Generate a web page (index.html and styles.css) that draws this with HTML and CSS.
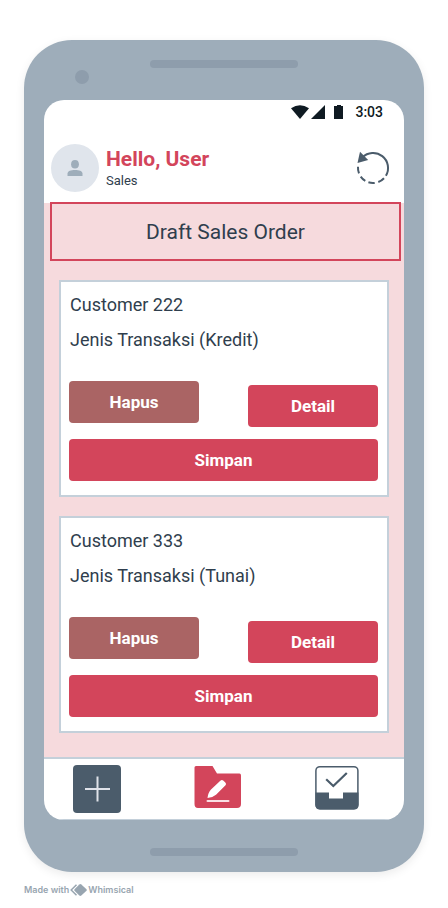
FILE: index.html
```html
<!DOCTYPE html>
<html lang="id">
<head>
<meta charset="utf-8">
<meta name="viewport" content="width=device-width, initial-scale=1">
<title>Draft Sales Order</title>
<link rel="stylesheet" href="styles.css">
</head>
<body>
<div class="phone">
  <div class="bezel bezel-top">
    <span class="camera"></span>
    <span class="slot"></span>
  </div>
  <div class="screen">
    <div class="status">
      <svg width="53" height="14" viewBox="0 0 53 14" fill="#0f1a22" aria-hidden="true">
        <path d="M0 3.2Q9-2.6 18 3.2L9 14Z"/>
        <path d="M34 0V14H20Z"/>
        <path d="M43 1H46V0H50V1H52V14H43Z"/>
      </svg>
      <span>3:03</span>
    </div>
    <header class="header">
      <svg class="avatar" viewBox="0 0 48 48" aria-hidden="true">
        <circle cx="24" cy="24" r="24" fill="#e0e5ec"/>
        <ellipse cx="24" cy="20.3" rx="3.9" ry="4.3" fill="#9eadba"/>
        <path d="M16.5 32V29.6C16.5 27 20 26 24 26S31.500 27 31.500 29.600V32Z" fill="#9eadba"/>
      </svg>
      <div class="user">
        <strong class="hello">Hello, User</strong>
        <span class="role">Sales</span>
      </div>
      <button class="refresh" type="button" aria-label="Refresh">
        <svg width="34" height="34" viewBox="0 0 34 34" fill="none" stroke="#4b5c6b" stroke-width="2">
          <path d="M6.400 6.400A15 15 0 0 1 29.900 24.700"/>
          <path d="M28 27.200A15 15 0 0 1 22.300 31M18.700 31.900A15 15 0 0 1 12.400 31.300M9.300 29.900A15 15 0 0 1 4.700 25.600M3 22.300A15 15 0 0 1 2 15.700"/>
          <path d="M4 .7L12.200 9L1.500 12Z" fill="#4b5c6b" stroke="none"/>
        </svg>
      </button>
    </header>
    <main class="content">
      <h1 class="title">Draft Sales Order</h1>
      <section class="card">
        <p class="line">Customer 222</p>
        <p class="line">Jenis Transaksi (Kredit)</p>
        <div class="actions">
          <button class="btn delete" type="button">Hapus</button>
          <button class="btn detail" type="button">Detail</button>
        </div>
        <button class="btn save" type="button">Simpan</button>
      </section>
      <section class="card">
        <p class="line">Customer 333</p>
        <p class="line">Jenis Transaksi (Tunai)</p>
        <div class="actions">
          <button class="btn delete" type="button">Hapus</button>
          <button class="btn detail" type="button">Detail</button>
        </div>
        <button class="btn save" type="button">Simpan</button>
      </section>
    </main>
    <nav class="nav">
      <a href="#" aria-label="New order">
        <svg width="48" height="48" viewBox="0 0 48 48">
          <rect width="48" height="48" rx="4" fill="#4b5c6b"/>
          <path d="M12 24H37M24.500 11.500V36.500" stroke="#dfe2e9" stroke-width="2"/>
        </svg>
      </a>
      <a href="#" aria-label="Drafts">
        <svg width="48" height="48" viewBox="-1 0 48 48">
          <path d="M2 1H18.500L23 8.500H45.500Q47 8.500 47 10.500V39Q47 43 43 43H4Q.5 43 .5 39V2.500Q.5 1 2 1Z" fill="#d3455b"/>
          <path d="M13.500 33Q14 27.500 17 24.500L26.300 15.700Q28 14.300 29.500 15.800L31.500 17.800Q32.700 19 31.500 20.300L22 29.800Q19 32.500 13.500 33Z" fill="#fff"/>
          <path d="M13.500 36H34.500" stroke="#fae0e5" stroke-width="2" stroke-linecap="round"/>
        </svg>
      </a>
      <a href="#" aria-label="Completed orders">
        <svg width="48" height="48" viewBox="1 0 48 48">
          <rect x="3.900" y="1.700" width="42" height="42" rx="4" fill="#fff" stroke="#4b5c6b" stroke-width="1.500"/>
          <path d="M3.500 27.500H17V33.500H31V27.500H46.500V40Q46.500 44.500 42 44.500H8Q3.500 44.500 3.500 40Z" fill="#4b5c6b"/>
          <path d="M14.200 14.200L21.300 21L34.800 8" fill="none" stroke="#4b5c6b" stroke-width="2.200"/>
        </svg>
      </a>
    </nav>
  </div>
  <div class="bezel bezel-bottom">
    <span class="slot"></span>
  </div>
</div>
<footer class="credit">
  <span>Made with</span>
  <svg width="17" height="12" viewBox="0 0 17 12" aria-hidden="true">
    <path d="M6.500 .8L1.200 6L6.500 11.200" fill="none" stroke="#98a5b0" stroke-width="1.500"/>
    <path d="M9.300 .4Q10.300-.4 11.300 .4L16.500 5.200Q17 6 16.500 6.800L11.300 11.600Q10.300 12.400 9.300 11.600L4.500 6.800Q4 6 4.500 5.200Z" fill="#98a5b0"/>
  </svg>
  <span>Whimsical</span>
</footer>
</body>
</html>
```

FILE: styles.css
```css
* {
  box-sizing: border-box;
}

body {
  margin: 0;
  padding: 40px 24px 0;
  background: #fff;
  color: #2f3e4d;
  font-family: Roboto, "Liberation Sans", sans-serif;
}

.phone {
  max-width: 480px;
  margin: 0 auto;
  padding: 0 20px;
  border-radius: 48px;
  background: #9eadba;
  box-shadow: 0 3px 10px rgba(0, 0, 0, 0.08);
}

.bezel {
  display: grid;
  grid-template-columns: 1fr auto 1fr;
}

.bezel-top {
  height: 60px;
  padding-top: 20px;
}

.bezel-bottom {
  height: 52px;
  padding-top: 28px;
}

.camera {
  width: 14px;
  height: 14px;
  margin: 10px 0 0 31px;
  border-radius: 50%;
  background: #8e9dac;
}

.slot {
  grid-column: 2;
  width: 148px;
  height: 8px;
  border-radius: 4px;
  background: #8e9dac;
}

.screen {
  overflow: hidden;
  border-radius: 20px;
  background: #fff;
}

.status {
  display: flex;
  align-items: center;
  justify-content: flex-end;
  gap: 11px;
  height: 24px;
  padding-right: 21px;
  color: #0f1a22;
  font-size: 14px;
  font-weight: 500;
}

.header {
  display: flex;
  align-items: center;
  height: 79px;
  padding: 9px 14px 0 7px;
}

.avatar {
  width: 48px;
  height: 48px;
}

.user {
  display: flex;
  flex: 1;
  flex-direction: column;
  padding-left: 7px;
}

.hello {
  color: #d3455b;
  font-size: 21px;
  line-height: 26px;
}

.role {
  font-size: 13px;
  line-height: 18px;
}

.refresh {
  display: flex;
  padding: 0;
  border: 0;
  background: none;
}

.content {
  display: flow-root;
  padding-bottom: 24px;
  background: #f6dadd;
}

.title {
  position: relative;
  margin: -1px 3px 19px 6px;
  padding: 15px 0 14px;
  border: 2px solid #d3455b;
  background: #f6dadd;
  font-size: 21px;
  font-weight: 400;
  line-height: 26px;
  text-align: center;
}

.card {
  margin: 0 15px;
  padding: 5px 9px 14px 8px;
  border: 2px solid #c4d0da;
  background: #fff;
}

.card + .card {
  margin-top: 19px;
}

.line {
  margin: 0;
  padding-left: 1px;
  font-size: 18px;
  line-height: 35px;
}

.actions {
  display: flex;
  justify-content: space-between;
  margin: 24px 0 12px;
}

.btn {
  width: 130px;
  height: 42px;
  padding: 0;
  border: 0;
  border-radius: 4px;
  background: #d3455b;
  color: #fff;
  font-family: inherit;
  font-size: 17px;
  font-weight: 700;
}

.delete {
  background: #aa6464;
}

.detail {
  margin-top: 4px;
}

.save {
  display: block;
  width: 100%;
}

.nav {
  display: flex;
  justify-content: space-between;
  height: 63px;
  padding: 6px 43px 0 29px;
  border-top: 2px solid #c4d0da;
  border-bottom: 1px solid #c4d0da;
}

.nav a {
  display: block;
  height: 48px;
}

.credit {
  display: flex;
  align-items: center;
  gap: 1px;
  max-width: 480px;
  margin: 12px auto 0;
  color: #98a5b0;
  font-family: Inter, sans-serif;
  font-size: 9px;
  font-weight: 600;
  line-height: 12px;
}
```
